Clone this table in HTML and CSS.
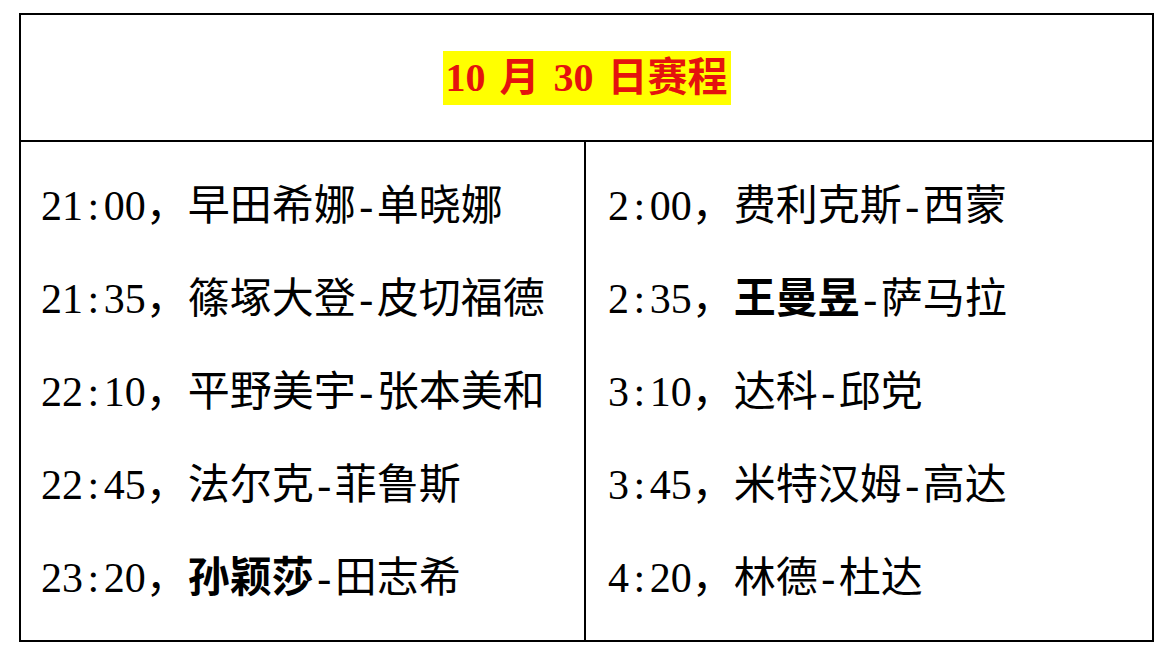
FILE: index.html
```html
<!DOCTYPE html>
<html lang="zh-CN">
<head>
<meta charset="utf-8">
<title>10月30日赛程</title>
<link rel="stylesheet" href="styles.css">
</head>
<body>
<div class="schedule">
  <div class="head">
    <h1 class="title">10 月 30 日赛程</h1>
  </div>
  <div class="body">
    <div class="col col-left">
      <p class="row"><span class="t">21<span class="c">:</span>00</span>，早田希娜<span class="d">-</span>单晓娜</p>
      <p class="row"><span class="t">21<span class="c">:</span>35</span>，篠塚大登<span class="d">-</span>皮切福德</p>
      <p class="row"><span class="t">22<span class="c">:</span>10</span>，平野美宇<span class="d">-</span>张本美和</p>
      <p class="row"><span class="t">22<span class="c">:</span>45</span>，法尔克<span class="d">-</span>菲鲁斯</p>
      <p class="row"><span class="t">23<span class="c">:</span>20</span>，<b class="b">孙颖莎</b><span class="d">-</span>田志希</p>
    </div>
    <div class="col col-right">
      <p class="row"><span class="t">2<span class="c">:</span>00</span>，费利克斯<span class="d">-</span>西蒙</p>
      <p class="row"><span class="t">2<span class="c">:</span>35</span>，<b class="b">王曼昱</b><span class="d">-</span>萨马拉</p>
      <p class="row"><span class="t">3<span class="c">:</span>10</span>，达科<span class="d">-</span>邱党</p>
      <p class="row"><span class="t">3<span class="c">:</span>45</span>，米特汉姆<span class="d">-</span>高达</p>
      <p class="row"><span class="t">4<span class="c">:</span>20</span>，林德<span class="d">-</span>杜达</p>
    </div>
  </div>
</div>
</body>
</html>
```

FILE: styles.css
```css
html, body {
  margin: 0;
  padding: 0;
  background: #fff;
}

body {
  font-family: "Liberation Serif", "Noto Sans CJK SC", serif;
  color: #000;
}

.schedule {
  box-sizing: border-box;
  margin: 13px 0 0 19px;
  width: 1135px;
  height: 629px;
  border: 2px solid #000;
  display: flex;
  flex-direction: column;
}

.head {
  height: 125px;
  border-bottom: 2px solid #000;
  display: flex;
  align-items: center;
  justify-content: center;
}

.title {
  margin: 0;
  display: inline-block;
  background: #ffff00;
  color: #e4120e;
  font-size: 40px;
  font-weight: bold;
  line-height: 54px;
  height: 54px;
  padding: 0 3px;
  word-spacing: 4px;
  white-space: nowrap;
}

.body {
  flex: 1;
  display: grid;
  grid-template-columns: 565px 1fr;
}

.col {
  padding-top: 18px;
}

.col-left {
  box-sizing: border-box;
  border-right: 2px solid #000;
  padding-left: 20px;
}

.col-right {
  padding-left: 22px;
}

.row {
  margin: 0;
  font-size: 42px;
  line-height: 93px;
  height: 93px;
  white-space: nowrap;
}

.c {
  padding: 0 4.5px;
}

.d {
  padding: 0 3.5px;
}

.b {
  font-weight: bold;
}
```
